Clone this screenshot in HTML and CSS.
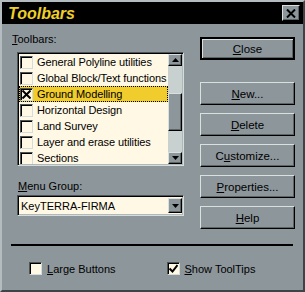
FILE: index.html
```html
<!DOCTYPE html>
<html lang="en">
<head>
  <meta charset="UTF-8">
  <title>Toolbars</title>
  <link rel="stylesheet" href="styles.css">
</head>
<body>
  <div class="dialog">
    <div class="titlebar">
      <span class="title">Toolbars</span>
      <span class="title-close">
        <svg width="10" height="9" viewBox="0 0 10 9"><path d="M1 0.5 L9 8.5 M9 0.5 L1 8.5" stroke="#000" stroke-width="2" fill="none"/></svg>
      </span>
    </div>

    <div class="content">
      <div class="main">
        <div class="left">
          <div class="label"><u>T</u>oolbars:</div>
          <div class="listbox">
            <div class="items">
              <div class="row"><span class="cb"></span>General Polyline utilities</div>
              <div class="row"><span class="cb"></span>Global Block/Text functions</div>
              <div class="row selected"><span class="cb">
                <svg width="9" height="9" viewBox="0 0 9 9"><path d="M0.5 0.5 L8.5 8.5 M8.5 0.5 L0.5 8.5" stroke="#000" stroke-width="2" fill="none"/></svg>
              </span>Ground Modelling</div>
              <div class="row"><span class="cb"></span>Horizontal Design</div>
              <div class="row"><span class="cb"></span>Land Survey</div>
              <div class="row"><span class="cb"></span>Layer and erase utilities</div>
              <div class="row"><span class="cb"></span>Sections</div>
            </div>
            <div class="scrollbar">
              <div class="sb-btn"><svg width="7" height="4" viewBox="0 0 7 4"><path d="M3.5 0 L7 4 L0 4 Z" fill="#000"/></svg></div>
              <div class="sb-track"><div class="sb-thumb"></div></div>
              <div class="sb-btn"><svg width="7" height="4" viewBox="0 0 7 4"><path d="M0 0 L7 0 L3.5 4 Z" fill="#000"/></svg></div>
            </div>
          </div>

          <div class="label menu-label"><u>M</u>enu Group:</div>
          <div class="combo">
            <span class="combo-text">KeyTERRA-FIRMA</span>
            <span class="combo-btn"><svg width="7" height="4" viewBox="0 0 7 4"><path d="M0 0 L7 0 L3.5 4 Z" fill="#000"/></svg></span>
          </div>
        </div>

        <div class="right">
          <div class="btn default"><span><u>C</u>lose</span></div>
          <div class="btn"><span><u>N</u>ew...</span></div>
          <div class="btn"><span><u>D</u>elete</span></div>
          <div class="btn"><span>C<u>u</u>stomize...</span></div>
          <div class="btn"><span><u>P</u>roperties...</span></div>
          <div class="btn"><span><u>H</u>elp</span></div>
        </div>
      </div>

      <div class="separator"></div>

      <div class="options">
        <div class="option large"><span class="cb"></span><u>L</u>arge Buttons</div>
        <div class="option tips"><span class="cb">
          <svg width="9" height="9" viewBox="0 0 9 9"><path d="M0.5 4.5 L3.5 7.5 L8.5 1" stroke="#000" stroke-width="2" fill="none"/></svg>
        </span><u>S</u>how ToolTips</div>
      </div>
    </div>
  </div>
</body>
</html>
```

FILE: styles.css
```css
body {
  margin: 0;
  font-family: "Liberation Sans", Arial, sans-serif;
  font-size: 11px;
  color: #000;
}
.dialog {
  width: 305px;
  height: 292px;
  box-sizing: border-box;
  background-color: #8d969b;
  border: 2px solid;
  border-color: #b4bcc0 #3c4448 #3c4448 #b4bcc0;
}
.titlebar {
  height: 22px;
  background-color: #000;
  display: flex;
  align-items: center;
  justify-content: space-between;
  padding: 0 3px 0 6px;
}
.title {
  font-size: 16px;
  font-weight: bold;
  font-style: italic;
  color: #f0d028;
  padding-top: 2px;
}
.title-close {
  width: 16px;
  height: 14px;
  background-color: #8d969b;
  border: 1px solid;
  border-color: #d8e0e0 #000 #000 #d8e0e0;
  box-shadow: inset -1px -1px #5c6468;
  display: flex;
  align-items: center;
  justify-content: center;
}
.content {
  padding-top: 9px;
}
.main {
  display: flex;
}
.left {
  margin-left: 10px;
  width: 172px;
}
.label {
  line-height: 13px;
}
.listbox {
  margin: 6px 0 0 5px;
  width: 167px;
  height: 114px;
  box-sizing: border-box;
  border: 1px solid;
  border-color: #4c5458 #d4dcdc #d4dcdc #4c5458;
  box-shadow: inset 1px 1px #000, inset -1px -1px #b0b8b8;
  padding: 1px;
  display: flex;
  background-color: #fff8e4;
}
.items {
  flex: 1;
  overflow: hidden;
  letter-spacing: -0.1px;
}
.row {
  height: 16px;
  display: flex;
  align-items: center;
  white-space: nowrap;
  box-sizing: border-box;
}
.row.selected {
  background-color: #f0cc2c;
  outline: 1px dotted #000;
  outline-offset: -1px;
}
.cb {
  width: 13px;
  height: 13px;
  box-sizing: border-box;
  flex: none;
  background-color: #fff8e4;
  border: 1px solid;
  border-color: #4c5458 #d4dcdc #d4dcdc #4c5458;
  box-shadow: inset 1px 1px #000;
  display: flex;
  align-items: center;
  justify-content: center;
}
.row .cb {
  margin: 0 4px 0 1px;
}
.scrollbar {
  width: 14px;
  display: flex;
  flex-direction: column;
  background-color: #c8d0d0;
}
.sb-btn, .sb-thumb, .combo-btn {
  background-color: #8d969b;
  border: 1px solid;
  border-color: #d8e0e0 #000 #000 #d8e0e0;
  box-shadow: inset -1px -1px #5c6468;
  box-sizing: border-box;
}
.sb-btn {
  height: 12px;
  display: flex;
  align-items: center;
  justify-content: center;
}
.sb-track {
  flex: 1;
  padding-top: 27px;
}
.sb-thumb {
  height: 38px;
}
.menu-label {
  margin: 14px 0 0 6px;
}
.combo {
  margin: 2px 0 0 5px;
  width: 167px;
  height: 21px;
  box-sizing: border-box;
  border: 1px solid;
  border-color: #4c5458 #d4dcdc #d4dcdc #4c5458;
  box-shadow: inset 1px 1px #000, inset -1px -1px #b0b8b8;
  background-color: #fff8e4;
  padding: 2px 1px 2px 3px;
  display: flex;
  align-items: center;
  justify-content: space-between;
}
.combo-btn {
  width: 14px;
  height: 15px;
  display: flex;
  align-items: center;
  justify-content: center;
}
.right {
  margin: 4px 0 0 16px;
  width: 95px;
  display: flex;
  flex-direction: column;
  gap: 8px;
}
.btn {
  height: 23px;
  box-sizing: border-box;
  border: 1px solid;
  border-color: #d8e0e0 #000 #000 #d8e0e0;
  box-shadow: inset -1px -1px #5c6468;
  display: flex;
  align-items: center;
  justify-content: center;
  font-size: 11.5px;
}
.btn.default {
  border: 2px solid #000;
  box-shadow: inset 1px 1px #d8e0e0, inset -1px -1px #5c6468;
  margin-bottom: 14px;
}
.separator {
  margin: 15px 10px 0 9px;
  height: 2px;
  background-color: #000;
}
.options {
  display: flex;
  margin-top: 16px;
}
.option {
  display: flex;
  align-items: center;
  height: 13px;
}
.option .cb {
  margin-right: 5px;
}
.large {
  margin-left: 27px;
}
.tips {
  margin-left: 51px;
}
```
